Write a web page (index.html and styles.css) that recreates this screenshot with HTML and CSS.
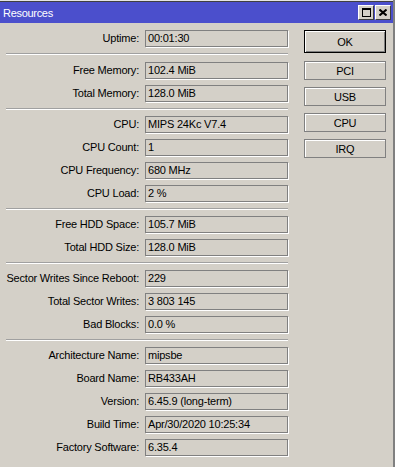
FILE: index.html
```html
<!DOCTYPE html>
<html lang="en">
<head>
  <meta charset="UTF-8" />
  <title>Resources</title>
  <link rel="stylesheet" href="styles.css">
</head>
<body>

  <div class="window">
    <div class="top-strip"></div>
    <div class="titlebar">
      <span class="title">Resources</span>
      <div class="title-buttons">
        <div class="tbtn"><span class="max-icon"></span></div>
        <div class="tbtn">
          <svg width="8" height="7" viewBox="0 0 8 7">
            <path d="M0.5 0.5 L7.5 6.5 M7.5 0.5 L0.5 6.5" stroke="#000" stroke-width="2" fill="none"/>
          </svg>
        </div>
      </div>
    </div>

    <div class="content">
      <div class="form">
        <label>Uptime:</label><div class="field">00:01:30</div>
        <div class="sep first"></div>
        <label>Free Memory:</label><div class="field">102.4 MiB</div>
        <label>Total Memory:</label><div class="field">128.0 MiB</div>
        <div class="sep"></div>
        <label>CPU:</label><div class="field">MIPS 24Kc V7.4</div>
        <label>CPU Count:</label><div class="field">1</div>
        <label>CPU Frequency:</label><div class="field">680 MHz</div>
        <label>CPU Load:</label><div class="field">2 %</div>
        <div class="sep"></div>
        <label>Free HDD Space:</label><div class="field">105.7 MiB</div>
        <label>Total HDD Size:</label><div class="field">128.0 MiB</div>
        <div class="sep"></div>
        <label>Sector Writes Since Reboot:</label><div class="field">229</div>
        <label>Total Sector Writes:</label><div class="field">3 803 145</div>
        <label>Bad Blocks:</label><div class="field">0.0 %</div>
        <div class="sep"></div>
        <label>Architecture Name:</label><div class="field">mipsbe</div>
        <label>Board Name:</label><div class="field">RB433AH</div>
        <label>Version:</label><div class="field">6.45.9 (long-term)</div>
        <label>Build Time:</label><div class="field">Apr/30/2020 10:25:34</div>
        <label>Factory Software:</label><div class="field">6.35.4</div>
      </div>

      <div class="buttons">
        <button class="btn btn-default">OK</button>
        <button class="btn">PCI</button>
        <button class="btn">USB</button>
        <button class="btn">CPU</button>
        <button class="btn">IRQ</button>
      </div>
    </div>
  </div>

</body>
</html>
```

FILE: styles.css
```css
body {
  margin: 0;
  background: #d4d0c8;
  font-family: 'Liberation Sans', Arial, sans-serif;
  font-size: 11px;
  letter-spacing: -0.2px;
  color: #000;
}

.window {
  width: 393px;
  height: 467px;
  border-right: 2px solid #808080;
  background: #d4d0c8;
  overflow: hidden;
}

.top-strip {
  height: 1px;
  background: #e4e4e4;
  border-bottom: 1px solid #404040;
}

.titlebar {
  height: 21px;
  background: #4b4fcc;
  display: flex;
  align-items: center;
  justify-content: space-between;
  padding: 0 2px 0 3px;
}

.title {
  color: #fff;
  font-size: 11px;
  letter-spacing: -0.3px;
}

.title-buttons {
  display: flex;
  gap: 1px;
}

.tbtn {
  width: 14px;
  height: 13px;
  background: #d4d0c8;
  border: 1px solid;
  border-color: #fff #404040 #404040 #fff;
  display: flex;
  align-items: center;
  justify-content: center;
}

.max-icon {
  width: 7px;
  height: 6px;
  border: 1px solid #000;
  border-top-width: 2px;
}

.content {
  display: flex;
  align-items: flex-start;
  padding-top: 7px;
}

.form {
  display: grid;
  grid-template-columns: 133px 143px;
  column-gap: 6px;
  row-gap: 6px;
  padding-left: 6px;
}

.form label {
  text-align: right;
  line-height: 17px;
  white-space: nowrap;
}

.field {
  height: 15px;
  line-height: 15px;
  padding-left: 2px;
  border: 1px solid #808080;
  box-shadow: 1px 1px 0 #fff;
  white-space: nowrap;
}

.sep {
  grid-column: 1 / -1;
  height: 1px;
  background: #a0a0a0;
  border-bottom: 1px solid #fff;
}

.sep.first {
  margin-bottom: 1px;
}

.buttons {
  display: flex;
  flex-direction: column;
  gap: 7px;
  margin-left: 16px;
  width: 82px;
}

.btn {
  height: 19px;
  padding: 0;
  background: #d4d0c8;
  border: 1px solid #808080;
  box-shadow: inset 1px 1px 0 #fff;
  font-family: inherit;
  font-size: 11px;
  letter-spacing: -0.2px;
  color: #000;
}

.btn-default {
  height: 23px;
  margin-bottom: 1px;
  border-color: #000;
  box-shadow: inset 1px 1px 0 #fff, inset -1px -1px 0 #808080;
}
```
